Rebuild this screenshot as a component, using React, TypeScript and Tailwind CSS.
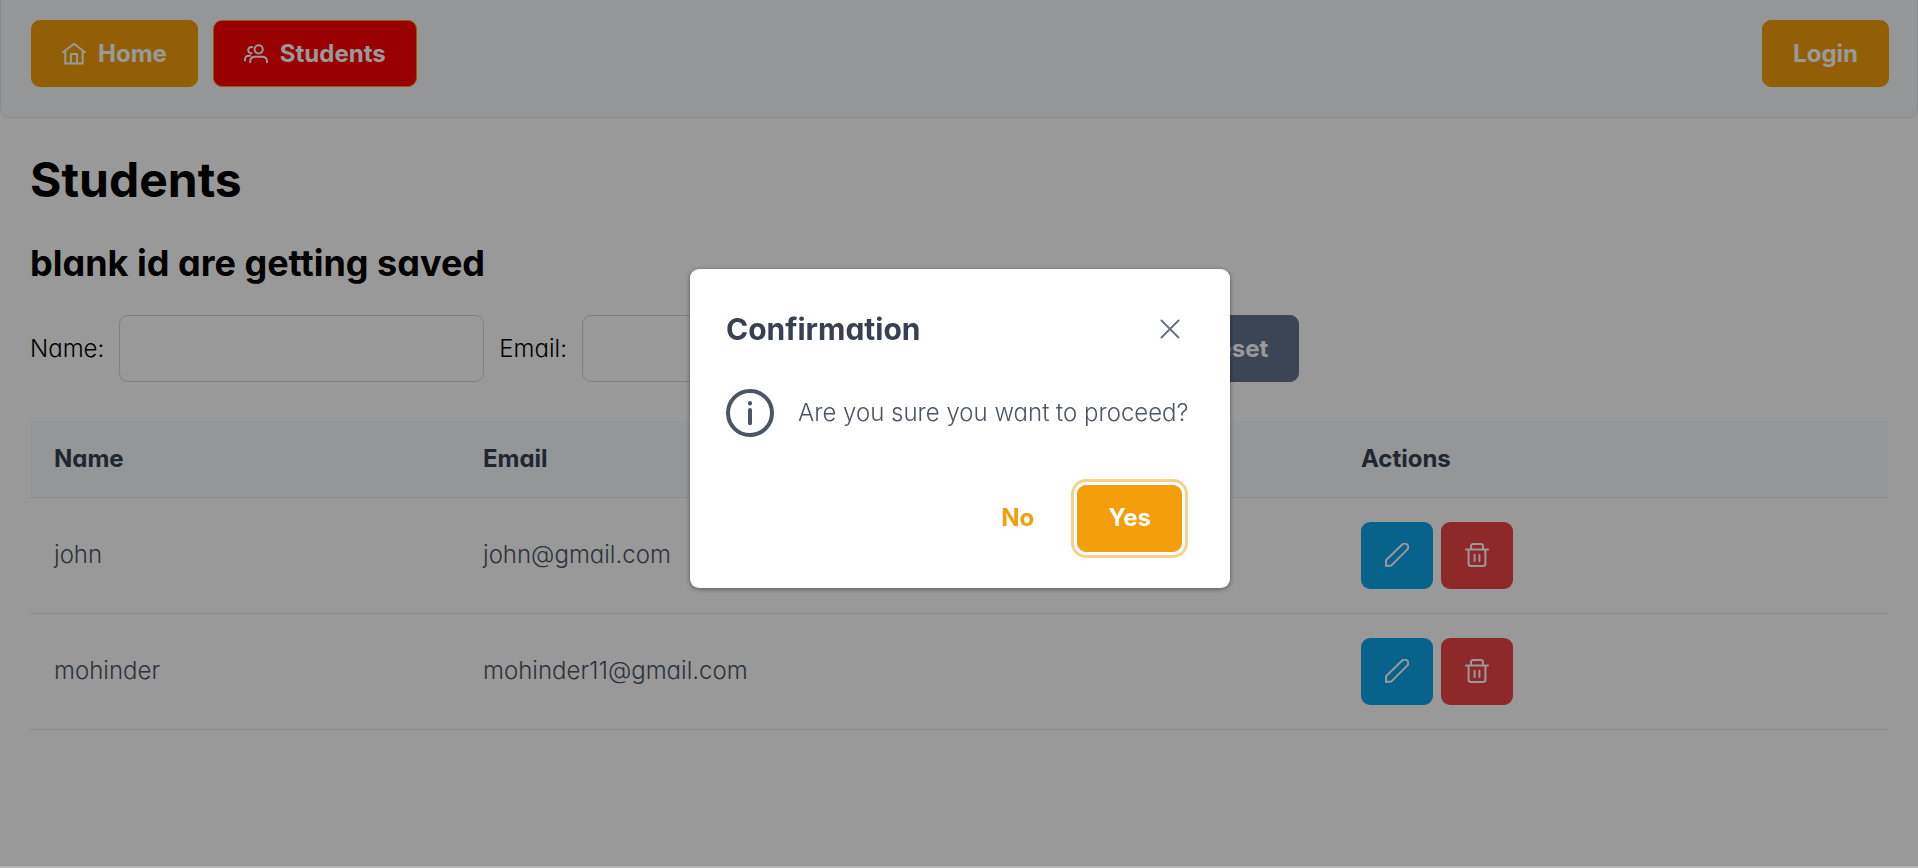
import React from 'react';

const students = [
  { name: 'john', email: 'john@gmail.com' },
  { name: 'mohinder', email: 'mohinder11@gmail.com' },
];

const button =
  'inline-flex h-[67px] items-center justify-center gap-3 rounded-[9px] border px-[30px] text-2xl font-bold';
const amberButton = `${button} border-[#f59e0b] bg-[#f59e0b] text-white`;
const iconButton = 'inline-flex h-[67px] w-[72px] items-center justify-center rounded-[9px] text-white';
const field = 'h-[67px] w-[365px] rounded-[9px] border border-[#d1d5db] bg-white px-4';

type IconProps = { children: React.ReactNode; className?: string; width?: number };

function Icon({ children, className = 'size-6', width = 2 }: IconProps) {
  return (
    <svg
      viewBox="0 0 24 24"
      className={`${className} shrink-0`}
      fill="none"
      stroke="currentColor"
      strokeWidth={width}
      strokeLinecap="round"
      strokeLinejoin="round"
      aria-hidden="true"
    >
      {children}
    </svg>
  );
}

const HomeIcon = () => (
  <Icon>
    <path d="M1 10.2 12 1.8l11 8.400M3.300 8.700v12.700h17.400V8.700M8.900 21.200v-9.300h6.200v9.300" />
  </Icon>
);

const UsersIcon = () => (
  <Icon>
    <circle cx="14.7" cy="7.3" r="4.1" />
    <path d="M6.200 20.300v-1c0-3 2.200-4.600 5-4.600h6.800c2.800 0 5 1.600 5 4.600v1M8.300 5.300C6 4.600 4.200 6 4.200 8.100c0 1.900 1.500 3.200 3.400 3.100M1 18.500v-1c0-2.300 1.500-3.700 3.800-3.700h1.400" />
  </Icon>
);

const PencilIcon = () => (
  <Icon>
    <path d="M1 23V17.300L17.200 1.500a3.500 3.500 0 0 1 5 .1a3.500 3.500 0 0 1 0 5L6.400 22.400L1 23Z" />
  </Icon>
);

const TrashIcon = () => (
  <Icon>
    <path d="M1 6.400h22M3.600 6.600v14.100c0 1.400.9 2.300 2.300 2.300h12.200c1.400 0 2.300-.9 2.300-2.300V6.600M6 6V3.300C6 1.900 7 1 8.400 1h7.200C17 1 18 1.900 18 3.300V6M9.600 11.700v6.300M14.400 11.700v6.300" />
  </Icon>
);

const InfoIcon = () => (
  <Icon className="size-12">
    <circle cx="12" cy="12" r="11" />
    <path d="M12 10.500v6.600M12 7v.2" />
  </Icon>
);

const CloseIcon = () => (
  <Icon>
    <path d="m3.500 3.500 17 17M20.500 3.500l-17 17" />
  </Icon>
);

export default function App() {
  return (
    <div className="min-h-screen bg-white font-[Inter,sans-serif] text-2xl font-[350] text-black [font-feature-settings:'cv02','cv03','cv04','cv11']">
      <nav className="flex items-start justify-between rounded-b-[9px] border border-t-0 border-[#dfe7ef] bg-[#f7fafd] pt-5 pr-7 pb-[30px] pl-[30px]">
        <div className="flex gap-[15px]">
          <button type="button" className={amberButton}>
            <HomeIcon />
            Home
          </button>
          <button type="button" className={`${button} border-[#f59e0b] bg-[#ff0000] text-white`}>
            <UsersIcon />
            Students
          </button>
        </div>
        <button type="button" className={amberButton}>
          Login
        </button>
      </nav>

      <main className="px-[30px]">
        <h1 className="pt-8 text-5xl leading-[60px] font-bold">Students</h1>
        <h2 className="pt-[31px] text-4xl leading-[45px] font-bold">blank id are getting saved</h2>

        <form className="flex items-center gap-[15px] pt-[29px]" onSubmit={(e) => e.preventDefault()}>
          <label htmlFor="name">Name:</label>
          <input id="name" type="text" className={field} />
          <label htmlFor="email">Email:</label>
          <input id="email" type="email" className={field} />
          <button type="submit" className={`${amberButton} w-[194px]`}>
            Save
          </button>
          <button type="reset" className={`${button} border-[#64748b] bg-[#64748b] text-white`}>
            Reset
          </button>
        </form>

        <table className="mt-[39px] w-full table-fixed border-collapse text-left text-[#4b5563]">
          <colgroup>
            <col className="w-[429px]" />
            <col className="w-[47.250%]" />
            <col />
          </colgroup>
          <thead className="bg-[#f7fafd] text-[#374151]">
            <tr className="h-[76px] border-b border-[#e5e7eb]">
              <th className="px-6 font-bold">Name</th>
              <th className="px-6 font-bold">Email</th>
              <th className="px-6 font-bold">Actions</th>
            </tr>
          </thead>
          <tbody>
            {students.map((student) => (
              <tr key={student.email} className="h-[116px] border-b border-[#e5e7eb]">
                <td className="px-6">{student.name}</td>
                <td className="px-6">{student.email}</td>
                <td className="px-6">
                  <div className="flex gap-2">
                    <button type="button" aria-label="Edit" className={`${iconButton} bg-[#0ea5e9]`}>
                      <PencilIcon />
                    </button>
                    <button type="button" aria-label="Delete" className={`${iconButton} bg-[#ef4444]`}>
                      <TrashIcon />
                    </button>
                  </div>
                </td>
              </tr>
            ))}
          </tbody>
        </table>
      </main>

      <div className="fixed inset-0 flex items-center justify-center border-b-2 border-[#b5b5b5] bg-black/40 bg-clip-padding pb-[10px] pl-[2px]">
        <section
          role="dialog"
          aria-modal="true"
          aria-labelledby="dialog-title"
          className="w-[540px] rounded-[9px] bg-white p-9 text-[#4b5563] shadow-[0_1px_5px_rgba(0,0,0,0.45)]"
        >
          <header className="flex h-12 items-center justify-between">
            <h2 id="dialog-title" className="text-3xl font-bold text-[#374151]">
              Confirmation
            </h2>
            <button type="button" aria-label="Close" className="flex size-12 items-center justify-center text-[#6b7280]">
              <CloseIcon />
            </button>
          </header>
          <div className="flex items-center gap-6 pt-9 whitespace-nowrap">
            <InfoIcon />
            <p>Are you sure you want to proceed?</p>
          </div>
          <footer className="flex justify-end gap-3 pt-12 pr-3">
            <button type="button" className={`${button} border-transparent text-[#f59e0b]`}>
              No
            </button>
            <button
              type="button"
              className={`${amberButton} shadow-[0_0_0_3px_#ffffff,0_0_0_6px_#f7d08f]`}
            >
              Yes
            </button>
          </footer>
        </section>
      </div>
    </div>
  );
}
